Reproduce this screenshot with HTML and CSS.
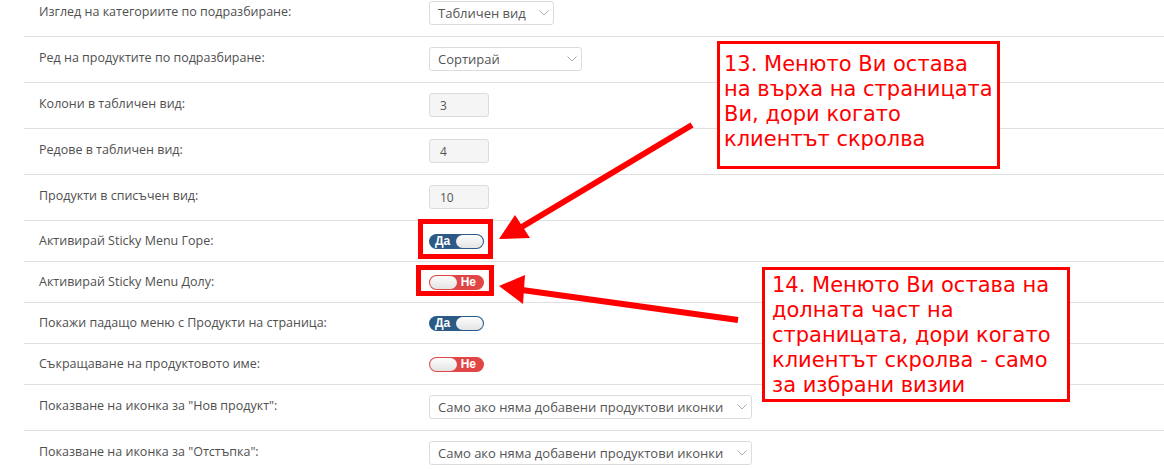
FILE: index.html
```html
<!DOCTYPE html>
<html lang="bg">
  <head>
    <meta charset="UTF-8" />
    <meta name="viewport" content="width=device-width, initial-scale=1.0" />
    <title>Настройки на категориите</title>
    <link rel="stylesheet" href="styles.css">
  </head>
  <body>
    <div class="settings">
      <div class="row">
        <div class="label">Изглед на категориите по подразбиране:</div>
        <div class="select w-sm"><span>Табличен вид</span><svg class="chevron" viewBox="0 0 10 6"><path d="M0.5 0.5 L5 5 L9.5 0.5" /></svg></div>
      </div>
      <div class="row">
        <div class="label">Ред на продуктите по подразбиране:</div>
        <div class="select w-md"><span>Сортирай</span><svg class="chevron" viewBox="0 0 10 6"><path d="M0.5 0.5 L5 5 L9.5 0.5" /></svg></div>
      </div>
      <div class="row">
        <div class="label">Колони в табличен вид:</div>
        <div class="num">3</div>
      </div>
      <div class="row">
        <div class="label">Редове в табличен вид:</div>
        <div class="num">4</div>
      </div>
      <div class="row">
        <div class="label">Продукти в списъчен вид:</div>
        <div class="num">10</div>
      </div>
      <div class="row toggle-row">
        <div class="label">Активирай Sticky Menu Горе:</div>
        <div class="toggle on"><span class="txt">Да</span><span class="knob"></span></div>
      </div>
      <div class="row toggle-row">
        <div class="label">Активирай Sticky Menu Долу:</div>
        <div class="toggle off"><span class="knob"></span><span class="txt">Не</span></div>
      </div>
      <div class="row toggle-row">
        <div class="label">Покажи падащо меню с Продукти на страница:</div>
        <div class="toggle on"><span class="txt">Да</span><span class="knob"></span></div>
      </div>
      <div class="row toggle-row">
        <div class="label">Съкращаване на продуктовото име:</div>
        <div class="toggle off"><span class="knob"></span><span class="txt">Не</span></div>
      </div>
      <div class="row">
        <div class="label">Показване на иконка за "Нов продукт":</div>
        <div class="select w-lg"><span>Само ако няма добавени продуктови иконки</span><svg class="chevron" viewBox="0 0 10 6"><path d="M0.5 0.5 L5 5 L9.5 0.5" /></svg></div>
      </div>
      <div class="row">
        <div class="label">Показване на иконка за "Отстъпка":</div>
        <div class="select w-lg"><span>Само ако няма добавени продуктови иконки</span><svg class="chevron" viewBox="0 0 10 6"><path d="M0.5 0.5 L5 5 L9.5 0.5" /></svg></div>
      </div>
    </div>

    <!-- annotations drawn over the page -->
    <svg class="marks" width="1164" height="469" viewBox="0 0 1164 469">
      <rect x="420.5" y="221.5" width="70" height="35" />
      <rect x="418.5" y="267.5" width="73" height="26" />
      <line x1="692" y1="125" x2="520" y2="228" />
      <polygon points="499,239 515,215 530,238" />
      <line x1="738" y1="320" x2="522" y2="290" />
      <polygon points="499,286 525,275 523,304" />
    </svg>

    <div class="note note-top">13. Менюто Ви остава на върха на страницата Ви, дори когато клиентът скролва</div>
    <div class="note note-bottom">14. Менюто Ви остава на долната част на страницата, дори когато клиентът скролва - само за избрани визии</div>
  </body>
</html>
```

FILE: styles.css
```css
body {
  margin: 0;
  background: #fff;
  font-family: "Open Sans", Arial, sans-serif;
  font-size: 13px;
  color: #555;
  overflow: hidden;
}

.settings {
  margin: -9px 0 0 24px;
}

.row {
  display: flex;
  align-items: center;
  padding: 10px 0 11px 15px;
  border-bottom: 1px solid #e0e0e0;
}

.row.toggle-row {
  height: 41px;
  padding: 0 0 0 15px;
  box-sizing: border-box;
}

.label {
  width: 390px;
  flex-shrink: 0;
  padding-bottom: 4px;
  font-size: 12.5px;
  color: #4f4f4f;
}

.toggle-row .label {
  padding-bottom: 1px;
}

.select {
  display: flex;
  align-items: center;
  justify-content: space-between;
  box-sizing: border-box;
  height: 24px;
  padding: 0 4px 0 8px;
  border: 1px solid #dcdcdc;
  border-radius: 3px;
  background: #fff;
  color: #555;
}

.select.w-sm { width: 125px; }
.select.w-md { width: 153px; }
.select.w-lg { width: 323px; }

.chevron {
  width: 10px;
  height: 6px;
}

.chevron path {
  fill: none;
  stroke: #a5a5a5;
  stroke-width: 0.9;
}

.num {
  box-sizing: border-box;
  width: 60px;
  height: 24px;
  padding: 3px 10px;
  border: 1px solid #dcdcdc;
  border-radius: 3px;
  background: #f5f5f5;
  color: #555;
  font-size: 12px;
}

.toggle {
  display: flex;
  align-items: center;
  justify-content: space-between;
  box-sizing: border-box;
  width: 55px;
  height: 15px;
  border-radius: 8px;
  padding: 1px;
  font-family: "Liberation Sans Narrow", "Liberation Sans", Arial, sans-serif;
  font-size: 12px;
  font-weight: bold;
  color: #fff;
}

.toggle.on { background: #2a5a85; }
.toggle.off { background: #e04646; }

.toggle .txt {
  line-height: 13px;
}

.toggle.on .txt { padding-left: 5px; }
.toggle.off .txt { padding-right: 7px; }

.knob {
  width: 27px;
  height: 13px;
  border-radius: 7px;
  background: linear-gradient(#fdfdfd, #e4e4e4);
}

.marks {
  position: absolute;
  top: 0;
  left: 0;
}

.marks rect {
  fill: none;
  stroke: #ff0000;
  stroke-width: 5;
}

.marks line {
  stroke: #ff0000;
  stroke-width: 6;
}

.marks polygon {
  fill: #ff0000;
}

.note {
  position: absolute;
  box-sizing: border-box;
  border: 3px solid #ff0000;
  background: #fff;
  color: #ff0000;
  font-family: "DejaVu Sans", Verdana, sans-serif;
  font-size: 21px;
  line-height: 25px;
}

.note-top {
  left: 717px;
  top: 41px;
  width: 283px;
  height: 128px;
  padding: 8px 4px 0 4px;
}

.note-bottom {
  left: 762px;
  top: 267px;
  width: 308px;
  height: 135px;
  padding: 3px 7px 0 7px;
}
```
